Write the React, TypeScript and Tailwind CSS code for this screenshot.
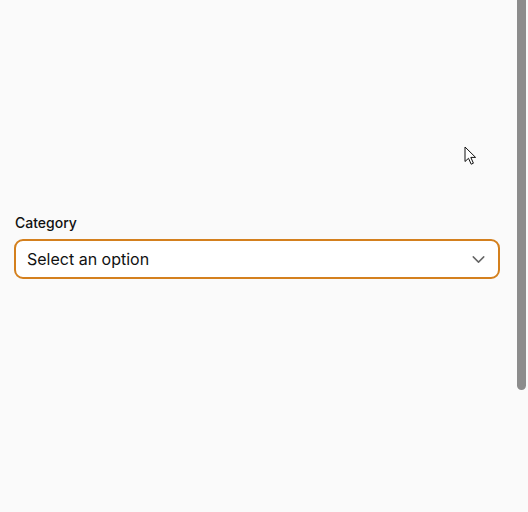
import { ChevronDown } from "lucide-react";

function Cursor() {
  return (
    <svg
      className="pointer-events-none absolute left-[464px] top-[146px]"
      width="14"
      height="20"
      viewBox="0 0 14 20"
    >
      <path
        d="M1 1 L1 15.5 L4.5 12.3 L7.2 18.2 L9.4 17.2 L6.8 11.4 L11.6 11.4 Z"
        fill="#fff"
        stroke="#111"
        strokeWidth="1"
        strokeLinejoin="round"
      />
    </svg>
  );
}

export default function App() {
  return (
    <div
      className="relative flex h-[512px] overflow-hidden bg-[#fafafa]"
      style={{ fontFamily: "Inter, 'Noto Sans', sans-serif" }}
    >
      <div className="flex-1 pt-[213px] pl-[14px] pr-[16px]">
        <label className="block pl-px text-[14px] font-medium leading-5 text-[#111]">Category</label>
        <button
          type="button"
          className="mt-[6px] flex h-[40px] w-full items-center justify-between rounded-[9px] border-2 border-[#d4801e] bg-white pl-[11px] pr-[9px] text-left"
        >
          <span className="text-[16px] text-[#111]">Select an option</span>
          <ChevronDown className="h-[21px] w-[21px] text-[#666]" strokeWidth={1.7} />
        </button>
      </div>
      <div className="w-[12px] shrink-0 pl-[1px]">
        <div className="h-[390px] w-[9px] rounded-b-full bg-[#8c8c8c]" />
      </div>
      <Cursor />
    </div>
  );
}
